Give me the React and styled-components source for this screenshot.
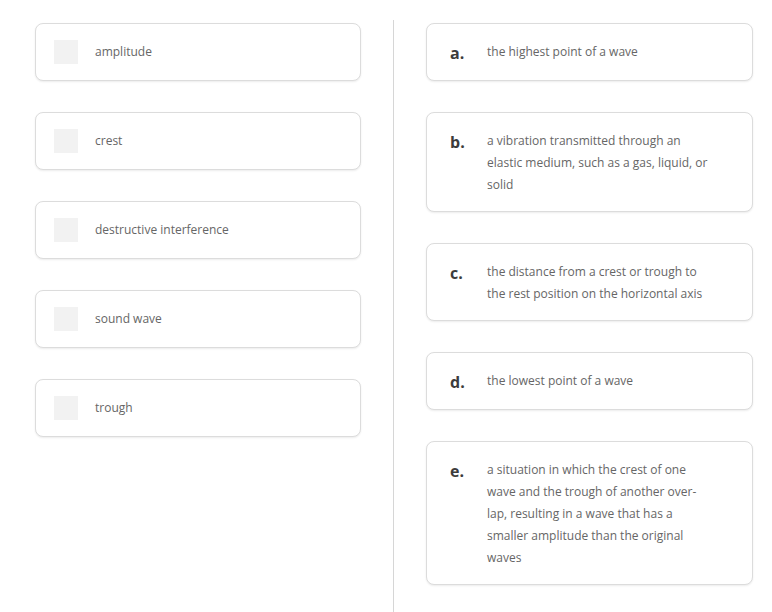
import styled, {createGlobalStyle} from 'styled-components';

const GlobalStyle=createGlobalStyle`
	html,body{
		margin:0;
		padding:0;
		background:#fff;
	}
	body{
		font-family:'Open Sans','Noto Sans',sans-serif;
	}
`
const Page=styled.div`
	display:flex;
	width:772px;
	height:612px;
	box-sizing:border-box;
	padding:23px 19px 0 35px;
	overflow:hidden;
`
const Column=styled.div`
	display:flex;
	flex-direction:column;
	gap:31px;
	width:${p=>p.$w}px;
	flex-shrink:0;
`
const Divider=styled.div`
	width:1px;
	background:#d6d6d6;
	margin:-3px 32px 0 32px;
	flex-shrink:0;
`
const Card=styled.div`
	display:flex;
	align-items:flex-start;
	box-sizing:border-box;
	border:1px solid #dcdcdc;
	border-radius:8px;
	background:#fff;
	box-shadow:0 1px 2px rgba(0,0,0,0.08);
	padding:${p=>p.$pad};
`
const Square=styled.div`
	width:24px;
	height:24px;
	background:#f2f2f2;
	flex-shrink:0;
	margin-right:17px;
`
const Term=styled.span`
	font-size:12px;
	line-height:24px;
	color:#666;
`
const Letter=styled.span`
	width:37px;
	flex-shrink:0;
	font-size:16px;
	font-weight:700;
	line-height:24px;
	color:#3c3c3c;
`
const Definition=styled.p`
	margin:0;
	width:228px;
	font-size:12px;
	line-height:22px;
	color:#666;
`

const terms=['amplitude','crest','destructive interference','sound wave','trough']
const defs=[
	['a.','the highest point of a wave'],
	['b.','a vibration transmitted through an elastic medium, such as a gas, liquid, or solid'],
	['c.','the distance from a crest or trough to the rest position on the horizontal axis'],
	['d.','the lowest point of a wave'],
	['e.','a situation in which the crest of one wave and the trough of another over-lap, resulting in a wave that has a smaller amplitude than the original waves'],
]

const App = () => {
	return (
		<>
			<GlobalStyle />
			<Page>
				<Column $w={326}>
					{terms.map(t=>(
						<Card key={t} $pad="16px 18px">
							<Square />
							<Term>{t}</Term>
						</Card>
					))}
				</Column>
				<Divider />
				<Column $w={327}>
					{defs.map(([l,d])=>(
						<Card key={l} $pad="17px 20px 15px 23px">
							<Letter>{l}</Letter>
							<Definition>{d}</Definition>
						</Card>
					))}
				</Column>
			</Page>
		</>
	)
}

export default App
